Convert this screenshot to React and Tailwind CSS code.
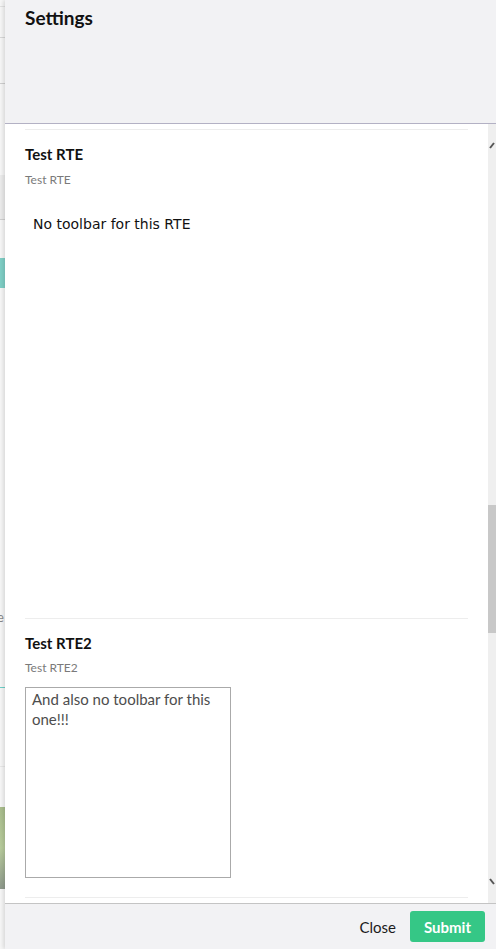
import React from "react";

function LeftStrip() {
  return (
    <div className="w-[5px] shrink-0 h-[949px] flex flex-col bg-[#f7f7f7] overflow-hidden font-['Lato',sans-serif] text-[#888]">
      <div className="h-[6px] shrink-0"></div>
      <div className="h-px shrink-0 bg-[#e2e2e2]"></div>
      <div className="h-[30px] shrink-0"></div>
      <div className="h-px shrink-0 bg-[#d8d8d8]"></div>
      <div className="h-[45px] shrink-0"></div>
      <div className="h-px shrink-0 bg-[#cfcfcf]"></div>
      <div className="h-[91px] shrink-0"></div>
      <div className="h-[44px] shrink-0 bg-[#ececec]"></div>
      <div className="h-px shrink-0 bg-[#d0d0d0]"></div>
      <div className="h-[38px] shrink-0"></div>
      <div className="h-[30px] shrink-0 bg-[#7fcfc6]"></div>
      <div className="h-[322px] shrink-0"></div>
      <div className="h-[14px] shrink-0 text-[13px] leading-[14px] overflow-hidden">
        <span className="block -ml-[3px]">e</span>
      </div>
      <div className="h-[63px] shrink-0"></div>
      <div className="h-px shrink-0 bg-[#6dd0c8]"></div>
      <div className="h-[78px] shrink-0"></div>
      <div className="h-px shrink-0 bg-[#e8e8e8]"></div>
      <div className="h-[40px] shrink-0"></div>
      <div className="h-[82px] shrink-0 bg-gradient-to-b from-[#a9bd8c] via-[#b8cc9c] to-[#8f9a8c]"></div>
      <div className="flex-1"></div>
    </div>
  );
}

function Scrollbar() {
  return (
    <div className="w-[8px] shrink-0 bg-[#efefef] flex flex-col items-center">
      <div className="h-[15px] shrink-0"></div>
      <svg width="8" height="12" viewBox="0 0 8 12" className="shrink-0">
        <path d="M2 9 L6 4" stroke="#555" strokeWidth="2" fill="none" />
      </svg>
      <div className="h-[354px] shrink-0"></div>
      <div className="w-[8px] h-[128px] shrink-0 bg-[#c8c8c8]"></div>
      <div className="flex-1"></div>
      <svg width="8" height="12" viewBox="0 0 8 12" className="shrink-0">
        <path d="M2 3 L6 8" stroke="#555" strokeWidth="2" fill="none" />
      </svg>
      <div className="h-[15px] shrink-0"></div>
    </div>
  );
}

export default function App() {
  return (
    <div className="w-[496px] h-[949px] flex bg-white overflow-hidden font-['Lato',sans-serif]">
      <LeftStrip />
      <div className="flex-1 flex flex-col h-[949px] shadow-[-2px_0_4px_rgba(0,0,0,0.12)] relative">
        <div className="h-[124px] shrink-0 bg-[#f2f2f4] px-[20px] pt-[6px] border-b border-[#b3b1c4]">
          <h1 className="text-[19px] leading-[24px] font-bold text-[#111]">Settings</h1>
        </div>
        <div className="flex-1 flex min-h-0">
          <div className="flex-1 pl-[20px] pr-[20px] pt-[5px] flex flex-col">
            <div className="h-px bg-[#ededed]"></div>
            <div className="pt-[14px]">
              <div className="text-[15px] leading-[20px] font-bold text-[#111]">Test RTE</div>
              <div className="text-[12px] leading-[16px] text-[#7a7a7a] mt-[8px]">Test RTE</div>
              <div className="h-[430px] pl-[8px] pt-[27px] font-['DejaVu_Sans',sans-serif] text-[14px] leading-[18px] text-[#111]">
                No toolbar for this RTE
              </div>
            </div>
            <div className="h-px bg-[#ededed]"></div>
            <div className="pt-[14px]">
              <div className="text-[15px] leading-[20px] font-bold text-[#111]">Test RTE2</div>
              <div className="text-[12px] leading-[16px] text-[#7a7a7a] mt-[7px]">Test RTE2</div>
              <div className="mt-[11px] w-[206px] h-[191px] border border-[#aaaaaa] px-[6px] pt-[1px] text-[15px] leading-[20px] text-[#4d4d4d]">
                And also no toolbar for this one!!!
              </div>
            </div>
            <div className="h-[19px] shrink-0"></div>
            <div className="h-px bg-[#ededed]"></div>
          </div>
          <Scrollbar />
        </div>
        <div className="h-[46px] shrink-0 bg-[#f2f2f4] border-t border-[#c4c4c4] flex items-center justify-end pr-[11px] gap-[14px]">
          <button className="text-[15px] leading-[20px] text-[#1b1b1b]">Close</button>
          <button className="w-[75px] h-[31px] rounded-[3px] bg-[#35c786] text-white font-bold text-[15px] leading-[20px]">Submit</button>
        </div>
      </div>
    </div>
  );
}
